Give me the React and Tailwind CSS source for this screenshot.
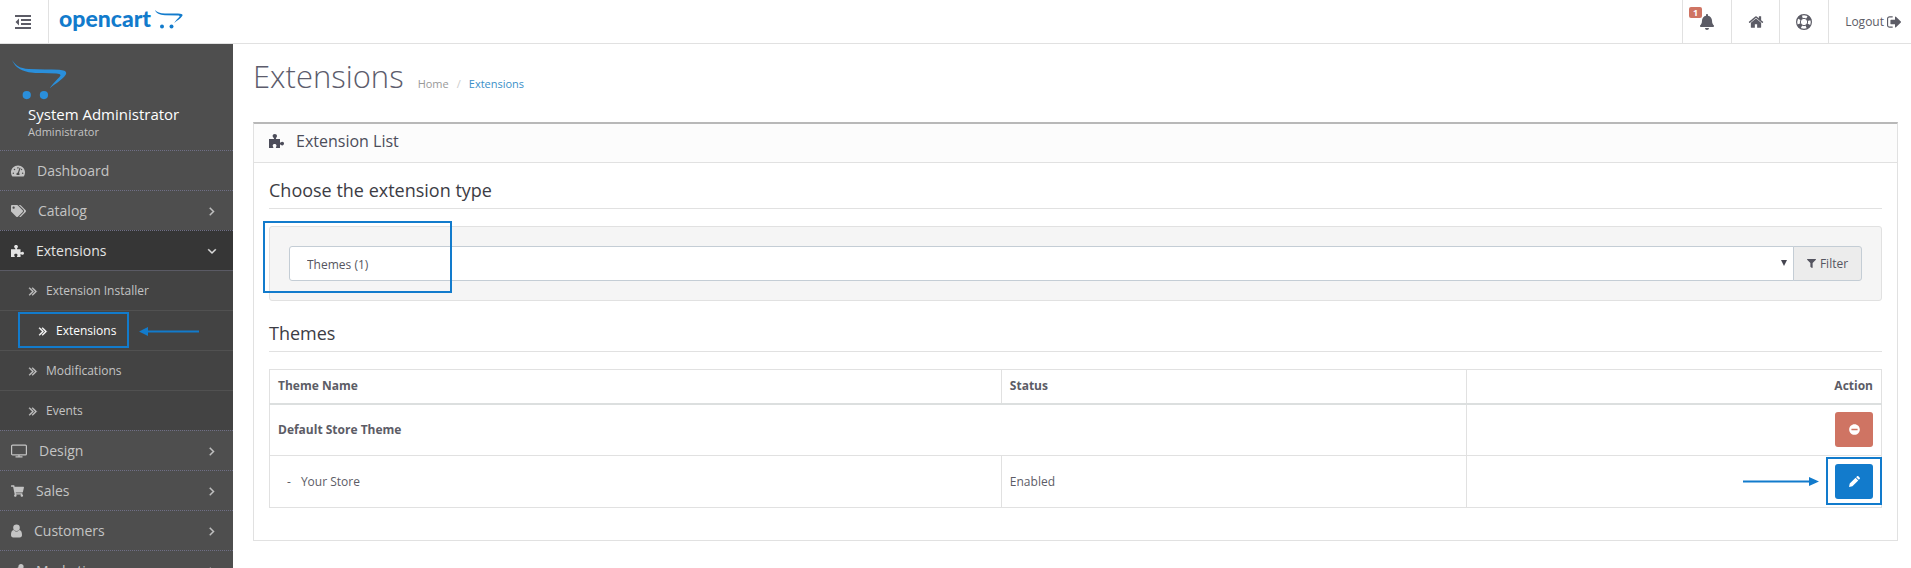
import React from 'react'
import {
  FaBell,
  FaFilter,
  FaMinusCircle,
  FaShareAlt,
  FaShoppingCart,
  FaTachometerAlt,
  FaTags,
} from 'react-icons/fa'

const Glyph = ({ d, className }) => (
  <svg viewBox="0 0 1792 1792" fill="currentColor" className={className} aria-hidden="true">
    <path d={d} />
  </svg>
)

const ANGLE_RIGHT =
  'M1171 960q0 13-10 23l-466 466q-10 10-23 10t-23-10l-50-50q-10-10-10-23t10-23l393-393-393-393q-10-10-10-23t10-23l50-50q10-10 23-10t23 10l466 466q10 10 10 23z'
const ANGLE_DOWN =
  'M1395 736q0 13-10 23l-466 466q-10 10-23 10t-23-10l-466-466q-10-10-10-23t10-23l50-50q10-10 23-10t23 10l393 393 393-393q10-10 23-10t23 10l50 50q10 10 10 23z'
const DOUBLE_RIGHT =
  'M979 960q0 13-10 23l-466 466q-10 10-23 10t-23-10l-50-50q-10-10-10-23t10-23l393-393-393-393q-10-10-10-23t10-23l50-50q10-10 23-10t23 10l466 466q10 10 10 23zm384 0q0 13-10 23l-466 466q-10 10-23 10t-23-10l-50-50q-10-10-10-23t10-23l393-393-393-393q-10-10-10-23t10-23l50-50q10-10 23-10t23 10l466 466q10 10 10 23z'
const HOME =
  'M1472 992v480q0 26-19 45t-45 19h-384v-384h-256v384h-384q-26 0-45-19t-19-45v-480q0-1 .5-3t.5-3l575-474 575 474q1 2 1 6zm223-69l-62 74q-8 9-21 11h-3q-13 0-21-7l-692-577-692 577q-12 8-24 7-13-2-21-11l-62-74q-8-10-7-23.5t11-21.5l719-599q32-26 76-26t76 26l244 204v-195q0-14 9-23t23-9h192q14 0 23 9t9 23v408l219 182q10 8 11 21.5t-7 23.5z'
const SIGN_OUT =
  'M640 1440q0 4 1 20t.5 26.5-3 23.5-10 19.5-20.5 6.5h-320q-119 0-203.5-84.5t-84.5-203.5v-704q0-119 84.5-203.5t203.5-84.5h320q13 0 22.5 9.5t9.5 22.5q0 4 1 20t.5 26.5-3 23.5-10 19.5-20.5 6.5h-320q-66 0-113 47t-47 113v704q0 66 47 113t113 47h312l11.5 1 11.5 3 8 5.5 7 9 2 13.5zm928-544q0 26-19 45l-544 544q-19 19-45 19t-45-19-19-45v-288h-448q-26 0-45-19t-19-45v-384q0-26 19-45t45-19h448v-288q0-26 19-45t45-19 45 19l544 544q19 19 19 45z'

const PuzzleIcon = ({ className }) => (
  <svg viewBox="0 0 15 14" fill="currentColor" className={className} aria-hidden="true">
    <path d="M0 5h4.600c.5 0 .6-.4.3-.8C4 3 3.600 2.600 3.600 2 3.600.8 4.500 0 5.800 0S8 .8 8 2c0 .7-.5 1.200-1 2.200-.3.500 0 .8.500.8H11v3.200c0 .4.300.6.700.300.500-.4.900-.7 1.600-.7 1 0 1.700.8 1.700 1.800s-.7 1.800-1.700 1.800c-.7 0-1.100-.3-1.600-.7-.4-.3-.7-.1-.7.300V14H7.400c-.5 0-.7-.3-.5-.7.300-.6.600-.9.600-1.600 0-1-.8-1.600-1.900-1.600s-1.900.6-1.900 1.600c0 .7.400 1 .7 1.600.2.400 0 .7-.5.700H0z" />
  </svg>
)

const TvIcon = ({ className }) => (
  <svg viewBox="0 0 16 13" fill="none" stroke="currentColor" className={className} aria-hidden="true">
    <rect x=".6" y=".6" width="14.800" height="9.800" rx="1" strokeWidth="1.200" />
    <path d="M8 10.500V12M4.500 12.400h7" strokeWidth="1.200" />
  </svg>
)

const UserIcon = ({ className }) => (
  <svg viewBox="0 0 11 13" fill="currentColor" className={className} aria-hidden="true">
    <circle cx="5.500" cy="3.300" r="3.300" />
    <path d="M2.600 5.600C.8 5.800 0 7.800 0 10.500 0 12 .8 13 2.300 13h6.400c1.500 0 2.300-1 2.300-2.500 0-2.700-.8-4.700-2.600-4.900C7.700 6.500 6.700 7.100 5.500 7.100s-2.200-.6-2.900-1.500z" />
  </svg>
)

const PencilIcon = ({ className }) => (
  <svg viewBox="0 0 12 12" fill="currentColor" className={className} aria-hidden="true">
    <path d="M7.200 1.900l2.900 2.900-6.400 6.400L0 12l.8-3.700zM7.800 1.300L8.800.3c.4-.4 1-.4 1.400 0l1.500 1.500c.4.4.4 1 0 1.400l-1 1z" />
  </svg>
)

const OutdentIcon = ({ className }) => (
  <svg viewBox="0 0 16 14" fill="currentColor" className={className} aria-hidden="true">
    <path d="M0 0h16v2H0zM6 4h10v2H6zM6 8h10v2H6zM0 12h16v2H0zM4 3.500v7L.5 7z" />
  </svg>
)

const LifeRingIcon = ({ className }) => (
  <svg viewBox="0 0 16 16" fill="none" stroke="currentColor" className={className} aria-hidden="true">
    <circle cx="8" cy="8" r="7.400" strokeWidth="1.200" />
    <circle cx="8" cy="8" r="3.700" strokeWidth="1" />
    <circle cx="8" cy="8" r="5.600" strokeWidth="4" strokeDasharray="3.800 4.996" strokeDashoffset="-2.500" />
  </svg>
)

const CartLogo = ({ className }) => (
  <svg viewBox="0 0 56 41" fill="currentColor" preserveAspectRatio="none" className={className} aria-hidden="true">
    <path d="M0 0c4 6 8 8.500 17 9.200 12 .8 22 .1 31 .8 6 .5 8.500 2 6.500 5.500C52 19.500 45 24 38.500 29c4-6 8.500-9.500 10.500-12.500 1.200-2-1-2.500-4-2.700-10-.6-19 .2-28-1.300C7 10.500 2.500 6 0 0z" />
    <circle cx="15" cy="36" r="4.200" />
    <circle cx="32.500" cy="36" r="4.200" />
  </svg>
)

// Same cart, with the flatter proportions used next to the wordmark
const CartMark = ({ className }) => (
  <svg viewBox="0 0 28 19" fill="currentColor" className={className} aria-hidden="true">
    <path d="M0 0c2 2.600 5 3.200 10 3.400l13 .1c4 .1 5.300.9 4.200 2.600-1.400 2.300-4.700 4.400-8 6.900 1.800-2.900 4-4.700 5.200-6.200.6-.9 0-1.300-1.500-1.400L10 5.200C4.500 5 1.200 3.400 0 0z" />
    <circle cx="7" cy="16.500" r="2" />
    <circle cx="16.500" cy="16.500" r="2" />
  </svg>
)

const menu = [
  { label: 'Dashboard', icon: FaTachometerAlt, size: 'w-3.5' },
  { label: 'Catalog', icon: FaTags, size: 'w-[15px]', arrow: true },
  {
    label: 'Extensions',
    icon: PuzzleIcon,
    size: 'w-[13px]',
    arrow: true,
    children: ['Extension Installer', 'Extensions', 'Modifications', 'Events'],
  },
  { label: 'Design', icon: TvIcon, size: 'w-4', arrow: true },
  { label: 'Sales', icon: FaShoppingCart, size: 'w-[13px]', arrow: true },
  { label: 'Customers', icon: UserIcon, size: 'w-[11px]', arrow: true },
  { label: 'Marketing', icon: FaShareAlt, size: 'w-[13px]', arrow: true },
]

const Header = () => (
  <header className="flex h-11 shrink-0 border-b border-[#e1e1e1] bg-white text-[#5c5c66]">
    <button type="button" aria-label="Toggle menu" className="flex w-[49px] items-center border-r border-[#e1e1e1] pl-[15px]">
      <OutdentIcon className="h-3.5 w-4" />
    </button>
    <a href="#" className="flex items-start gap-1 pl-[10px] text-[#127bcc]">
      <span className="font-['Lato',sans-serif] text-[23px] leading-[36px] font-black">opencart</span>
      <CartMark className="mt-2.5 h-[19px] w-7" />
    </a>
    <nav className="ml-auto flex text-xs">
      <a href="#" aria-label="Notifications" className="relative flex w-[49px] items-center justify-center border-l border-[#e1e1e1]">
        <FaBell className="h-4 w-3.5" />
        <span className="absolute top-[7px] left-1.5 flex h-[11px] w-[13px] items-center justify-center rounded-xs bg-[#cf7463] text-[9px] font-bold text-white">
          1
        </span>
      </a>
      <a href="#" aria-label="Home" className="flex w-12 items-center justify-center border-l border-[#e1e1e1]">
        <Glyph d={HOME} className="size-4" />
      </a>
      <a href="#" aria-label="Help" className="flex w-[49px] items-center justify-center border-l border-[#e1e1e1]">
        <LifeRingIcon className="size-4" />
      </a>
      <a href="#" className="flex items-center gap-[3px] border-l border-[#e1e1e1] pr-2 pl-4">
        Logout
        <Glyph d={SIGN_OUT} className="size-4" />
      </a>
    </nav>
  </header>
)

const SubItem = ({ label }) => {
  const active = label === 'Extensions'
  return (
    <li className="relative border-t border-[#515151] first:border-[#5a5a64]">
      <a
        href="#"
        className={
          active
            ? 'flex h-[39px] items-center gap-1.5 pl-9 text-xs text-white'
            : 'flex h-[39px] items-center gap-1.5 pl-[26px] text-xs text-[#c4c4c4]'
        }
      >
        <Glyph d={DOUBLE_RIGHT} className="size-3.5 stroke-current stroke-[60]" />
        {label}
      </a>
      {active && (
        <>
          <span className="absolute top-px left-[18px] h-9 w-[111px] border-2 border-[#127bcc]" />
          <svg className="absolute top-4 left-[139px] h-[9px] w-[60px]" viewBox="0 0 60 9" fill="#127bcc" aria-hidden="true">
            <path d="M0 4.500 9 0v3.500h51v2H9V9z" />
          </svg>
        </>
      )}
    </li>
  )
}

const Sidebar = () => (
  <aside className="w-[233px] shrink-0 overflow-hidden bg-[#4e4e4e]">
    <div className="h-[106px] pt-4 pl-3">
      <CartLogo className="h-10 w-[55px] text-[#2a8fdb]" />
      <div className="mt-1 pl-4">
        <h4 className="text-[15px] leading-5 text-white">System Administrator</h4>
        <small className="block text-[11px] leading-4 text-[#c4c4c4]">Administrator</small>
      </div>
    </div>
    <ul>
      {menu.map(({ label, icon: Icon, size, arrow, children }) => (
        <li key={label}>
          <a
            href="#"
            className={
              children
                ? 'flex h-10 items-center border-t border-dotted border-[#6f6f86] bg-[#363636] pr-[14px] pl-[11px] text-sm text-[#e4e4e4]'
                : 'flex h-10 items-center border-t border-dotted border-[#6f6f86] pr-[14px] pl-[11px] text-sm text-[#c4c4c4]'
            }
          >
            <Icon className={`${size} mr-3 h-3.5 shrink-0`} />
            <span>{label}</span>
            {arrow && <Glyph d={children ? ANGLE_DOWN : ANGLE_RIGHT} className="ml-auto size-3.5 stroke-current stroke-[60]" />}
          </a>
          {children && (
            <ul className="bg-[#434343]">
              {children.map((child) => (
                <SubItem key={child} label={child} />
              ))}
            </ul>
          )}
        </li>
      ))}
    </ul>
  </aside>
)

const SectionTitle = ({ id, children }) => (
  <h3 id={id} className="border-b border-[#e1e1e1] pb-2 text-lg leading-5 text-[#3c3c44]">
    {children}
  </h3>
)

const FilterBar = () => (
  <div className="relative mt-[17px] flex rounded-[3px] border border-[#e1e1e1] bg-[#f5f5f5] p-[19px]">
    <div className="relative flex-1">
      <select
        aria-labelledby="type-title"
        className="h-[35px] w-full appearance-none rounded-l-[3px] border border-[#c4cdd5] bg-white px-[17px] pt-0.5 text-xs text-[#555560]"
      >
        <option>Themes (1)</option>
      </select>
      <span className="pointer-events-none absolute top-3.5 right-[7px] size-0 border-x-3 border-t-6 border-x-transparent border-t-[#454550]" />
    </div>
    <button
      type="button"
      className="flex w-[69px] -ml-px items-center justify-center gap-1 rounded-r-[3px] border border-[#c4cdd5] bg-[#ececec] text-xs text-[#555560]"
    >
      <FaFilter className="size-[9px]" />
      Filter
    </button>
    <span className="pointer-events-none absolute -top-1.5 -left-[7px] h-[72px] w-[189px] border-2 border-[#127bcc]" />
  </div>
)

const ThemeTable = () => (
  <table className="mt-[17px] w-full table-fixed border-collapse border border-[#e1e1e1] text-left text-xs text-[#5c5c66]">
    <colgroup>
      <col className="w-[45.400%]" />
      <col className="w-[28.850%]" />
      <col />
    </colgroup>
    <thead>
      <tr className="h-[34px] border-b-2 border-[#dcdfdf]">
        <th className="border-r border-[#e1e1e1] px-2 font-bold">Theme Name</th>
        <th className="border-r border-[#e1e1e1] px-2 font-bold">Status</th>
        <th className="px-2 text-right font-bold">Action</th>
      </tr>
    </thead>
    <tbody>
      <tr className="h-[52px] border-b border-[#e1e1e1]">
        <td colSpan={2} className="border-r border-[#e1e1e1] px-2 font-bold">
          Default Store Theme
        </td>
        <td className="px-2">
          <button type="button" aria-label="Uninstall" className="ml-auto flex h-[35px] w-[38px] items-center justify-center rounded-[3px] bg-[#cf7463] text-white">
            <FaMinusCircle className="size-[11px]" />
          </button>
        </td>
      </tr>
      <tr className="h-[52px]">
        <td className="border-r border-[#e1e1e1] px-2">
          <span className="mr-2.5 ml-[9px]">-</span>
          Your Store
        </td>
        <td className="border-r border-[#e1e1e1] px-2">Enabled</td>
        <td className="relative px-2">
          <button type="button" aria-label="Edit" className="ml-auto flex h-[35px] w-[38px] items-center justify-center rounded-[3px] bg-[#127bcc] text-white">
            <PencilIcon className="size-[11px]" />
          </button>
          <span className="pointer-events-none absolute top-px -right-px h-12 w-14 border-2 border-[#127bcc]" />
          <svg className="absolute top-[21px] right-[62px] h-[9px] w-[76px]" viewBox="0 0 76 9" fill="#127bcc" aria-hidden="true">
            <path d="M76 4.500 66 0v3.500H0v2h66V9z" />
          </svg>
        </td>
      </tr>
    </tbody>
  </table>
)

const App = () => (
  <div className="flex h-screen flex-col bg-white font-['Open_Sans',sans-serif]">
    <Header />
    <div className="flex min-h-0 flex-1">
      <Sidebar />
      <main className="min-w-0 flex-1 pr-[13px] pl-5">
        <div className="flex h-[78px] items-baseline pt-3">
          <h1 className="text-[31px] leading-10 font-light text-[#5c5c6c]">Extensions</h1>
          <nav className="ml-3.5 flex text-[11px] text-[#999999]">
            <a href="#">Home</a>
            <span className="px-2 text-[#cccccc]">/</span>
            <a href="#" className="text-[#3a8fc8]">
              Extensions
            </a>
          </nav>
        </div>
        <section className="border border-t-2 border-[#e1e1e1] border-t-[#b8b8b8] pb-8">
          <h2 className="flex h-[39px] items-center gap-3 border-b border-[#e1e1e1] bg-[#fcfcfc] px-[15px] pb-1 text-base text-[#4c4d5a]">
            <PuzzleIcon className="h-3.5 w-[15px]" />
            Extension List
          </h2>
          <div className="px-[15px] pt-[17px]">
            <SectionTitle id="type-title">Choose the extension type</SectionTitle>
            <FilterBar />
            <div className="pt-[22px]">
              <SectionTitle>Themes</SectionTitle>
            </div>
            <ThemeTable />
          </div>
        </section>
      </main>
    </div>
  </div>
)

export default App
